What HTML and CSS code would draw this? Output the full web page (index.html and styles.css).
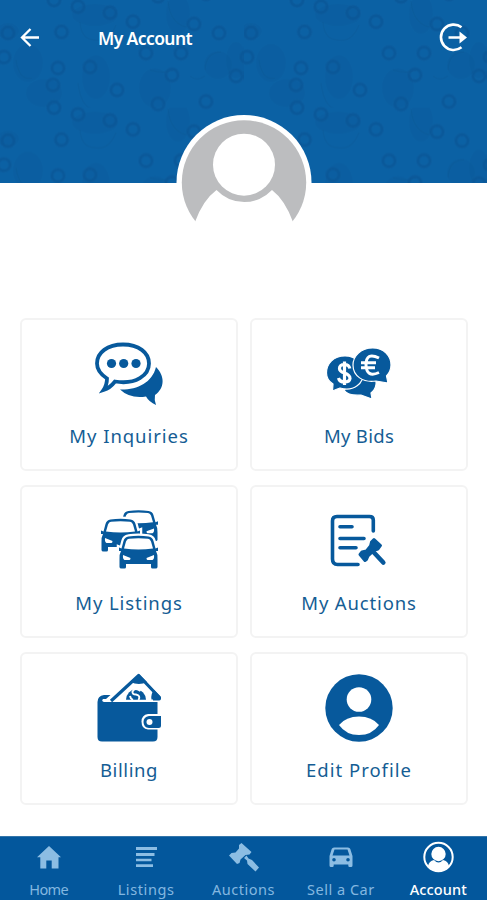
FILE: index.html
```html
<!DOCTYPE html>
<html lang="en">
<head>
<meta charset="utf-8">
<title>My Account</title>
<link rel="stylesheet" href="styles.css">
</head>
<body>
<div class="screen">
  <header class="hero">
    <svg class="hero-pattern" width="487" height="183" aria-hidden="true">
      <defs>
        <g id="ring"><circle r="6" fill="none" stroke="#09508f" stroke-opacity=".2" stroke-width="4.500"/><circle r="6" fill="none" stroke="#09508f" stroke-opacity=".3" stroke-width="2.500"/></g>
        <pattern id="doodles" width="243" height="107.7" patternUnits="userSpaceOnUse">
          <g fill="#084f8d" fill-opacity=".13">
            <ellipse cx="95" cy="15" rx="23" ry="11"/><ellipse cx="28" cy="63" rx="15" ry="19"/>
            <ellipse cx="96" cy="77" rx="14" ry="22"/><ellipse cx="178" cy="14" rx="12" ry="20"/>
            <ellipse cx="218" cy="65" rx="14" ry="14"/><ellipse cx="44" cy="93" rx="18" ry="14"/>
            <ellipse cx="155" cy="88" rx="16" ry="20"/><ellipse cx="8" cy="31" rx="11" ry="8"/>
            <ellipse cx="236" cy="60" rx="10" ry="18"/>
          </g>
          <g fill="none" stroke="#09508f" stroke-opacity=".22" stroke-width="1.5">
            <path d="M80 22q1 17 14 18 15 3 22-15M78 83q3 24 15 26M168 1q2 22 18 26M150 70q13 4 23 0M190 76q7 6 15 0M16 60q3 21 16 18M205 70q1-18 16-18"/>
          </g>
          <use href="#ring" x="78" y="6.7"/><use href="#ring" x="78" y="114.4"/>
          <use href="#ring" x="110" y="12.7"/><use href="#ring" x="133" y="21.7"/>
          <use href="#ring" x="61.5" y="32"/><use href="#ring" x="194" y="24"/>
          <use href="#ring" x="219" y="33"/><use href="#ring" x="146" y="53"/>
          <use href="#ring" x="181" y="53"/><use href="#ring" x="58" y="68"/>
          <use href="#ring" x="90" y="67"/><use href="#ring" x="53" y="85"/>
          <use href="#ring" x="117" y="90"/><use href="#ring" x="172" y="75"/>
          <use href="#ring" x="158" y="104"/><use href="#ring" x="158" y="-3.7"/>
          <use href="#ring" x="206" y="101.5"/><use href="#ring" x="206" y="-6.2"/>
          <use href="#ring" x="4" y="57"/><use href="#ring" x="247" y="57"/>
          <use href="#ring" x="236" y="76"/><use href="#ring" x="8" y="33"/>
          <use href="#ring" x="54" y="0"/><use href="#ring" x="54" y="107.7"/>
        </pattern>
      </defs>
      <rect width="487" height="183" fill="url(#doodles)"/>
    </svg>
    <div class="topbar">
      <svg width="20" height="20" viewBox="0 0 20 20" fill="none" stroke="#fff" stroke-width="2.3"><path d="M19 9.500H2.500M10.500 1 2 9.500l8.500 8.500"/></svg>
      <h1 class="title">My Account</h1>
      <svg class="logout" width="30" height="30" viewBox="0 0 30 30" fill="none" stroke="#fff" stroke-width="2.600"><path d="M23.500 4.300A12.700 12.700 0 1 0 23.500 24.300M10.500 14.500H26"/><path d="M21.500 8.500 29 14.500l-7.500 6z" fill="#fff" stroke="none"/></svg>
    </div>
    <svg class="avatar" width="136" height="136" viewBox="176 114 136 136" role="img" aria-label="Avatar">
      <circle cx="244" cy="182.500" r="67.500" fill="#fff"/>
      <circle cx="244" cy="182.500" r="62.200" fill="#bcbdbf"/>
      <path d="M195 222Q203 200 216.500 190A38 38 0 0 0 272 190Q285 200 293 222L300 250H188Z" fill="#fff"/>
      <circle cx="244" cy="164.700" r="31" fill="#fff"/>
    </svg>
  </header>

  <main class="cards">
    <a class="card">
      <svg class="icon" viewBox="89 333 80 80">
        <path d="M156 367C165 376 165 388 155 395Q154 400 156 405Q149 402 146 396.500Q130 399 120 389.500C137 390 152 383 156 367Z" fill="#07599c"/>
        <path d="M123 344.500C107.500 344.500 97 352.500 97 363.500Q97 372 107 378.500Q107 385 103.500 390Q110 388 115 381.500C136 385 149 375 149 363.500C149 352.500 138.500 344.500 123 344.500Z" fill="#fff" stroke="#07599c" stroke-width="3.800"/>
        <g fill="#07599c"><circle cx="111.500" cy="363.500" r="4.600"/><circle cx="123.700" cy="363.500" r="4.600"/><circle cx="136" cy="363.500" r="4.600"/></g>
      </svg>
      <span class="label inquiries">My Inquiries</span>
    </a>
    <a class="card">
      <svg class="icon" viewBox="319 333 80 80">
        <g fill="#07599c" stroke="#fff" stroke-width="1.200">
          <path d="M344 390Q348 396 361 395L372 399L371 393Q377 389 376 380L360 378Z"/>
          <path d="M345 356C333 356 326.500 364 326.500 373Q326.500 380 333 384L332.500 391Q337 389 340 388C354 392 364 383 363 373C363 364 356 356 345 356Z"/>
          <path d="M372.700 348C361 348 353 356 353 365C353 376 363 383 376 381L388 383L386.500 376Q391 371 391 365C391 356 384 348 372.700 348Z"/>
        </g>
        <path d="M349.800 368.500Q349 364.500 344.500 364.500Q339.500 364.500 339.500 368.500Q339.500 371.500 344.500 373Q350 375 350 378.500Q349.500 382 344.500 382Q339.500 382 338.500 378M344.500 361.500V385" fill="none" stroke="#fff" stroke-width="3.200"/>
        <path d="M379 358Q366 351.500 366 365Q366.500 378 379 372.500M361 362.700H376M361 367.700H375" fill="none" stroke="#fff" stroke-width="3"/>
      </svg>
      <span class="label bids">My Bids</span>
    </a>
    <a class="card">
      <svg class="icon" viewBox="89 500 80 80">
        <defs>
          <g id="frontcar">
            <path d="M-15-13Q-14-17-10-17.500Q0-19 10-17.500Q14-17 15-13L17-5.500L19.500-6.500V-3H17.500Q19.200 0 19 5V13Q19 14.500 17 14.500H14Q12.500 14.500 12.500 13V10H-12.500V13Q-12.500 14.500-14 14.500H-17Q-19 14.500-19 13V5Q-19.200 0-17.500-3H-19.500V-6.500L-17-5.500Z" />
            <path d="M-12.500-12.500Q-11.500-15-9.500-15.300Q0-16.300 9.500-15.300Q11.500-15 12.500-12.500L14.500-5.500Q0-3.500 -14.500-5.500ZM-15.500 1L-8 4Q-8 6-9 6H-14Q-16 5-15.500 1ZM15.500 1L8 4Q8 6 9 6H14Q16 5 15.500 1Z" fill="#fff"/>
          </g>
        </defs>
        <g fill="#07599c">
          <use href="#frontcar" transform="translate(138.500 527.500) scale(1 .95)"/>
          <use href="#frontcar" transform="translate(120.500 537)" stroke="#fff" stroke-width="4.500"/>
          <use href="#frontcar" transform="translate(120.500 537)"/>
          <use href="#frontcar" transform="translate(138.500 554)" stroke="#fff" stroke-width="4.500"/>
          <use href="#frontcar" transform="translate(138.500 554)"/>
        </g>
      </svg>
      <span class="label listings">My Listings</span>
    </a>
    <a class="card">
      <svg class="icon" viewBox="319 500 80 80">
        <g fill="none" stroke="#07599c" stroke-width="3.600" stroke-linecap="round">
          <path d="M373.300 531V520Q373.300 516.500 369.500 516.500H337Q332.500 516.500 332.500 521V559Q332.500 564.500 337.500 564.500H358M340 526.800H352M340 538.500H364M340 547.700H356" />
        </g>
        <g fill="#07599c" stroke="#07599c" stroke-linejoin="round" stroke-linecap="round">
          <path d="M374 539.500 380.500 545.500 378 549 374.500 550 368 556 366.500 559.500 365 560.500 360 554.500 362 552 366.500 551 370.500 546 371.500 542Z" stroke-width="3"/>
          <path d="M373 551.500 383.300 562.500" stroke-width="4.600"/>
        </g>
      </svg>
      <span class="label auctions">My Auctions</span>
    </a>
    <a class="card">
      <svg class="icon" viewBox="89 667 80 80">
        <path d="M111 701 138.700 675.500 159 697V699H153" fill="#fff" stroke="#07599c" stroke-width="3.200" stroke-linejoin="round"/>
        <path d="M138.700 674 147 682Q139 686 130.500 682ZM154 690 161 697V699.500H151.500Q150.500 694 154 690Z" fill="#07599c"/>
        <path d="M126 699.800A10 10.500 0 1 1 146 699.800Z" fill="#07599c"/>
        <path d="M140.500 691Q135 687 132.500 691.500Q132 694.500 136 694.500Q141 695.500 138.500 700M130 696Q130.500 699 133 700" fill="none" stroke="#fff" stroke-width="1.900"/>
        <path d="M110.500 695H104Q97.500 696 97.500 702V737Q97.500 741.500 102 741.500H153Q157.500 741.500 157.500 737V702H104Q101 701 103 699H106Z" fill="#07599c"/>
        <path d="M164 714H148Q141.500 715 141.500 721.500Q141.500 729 148 729.500H164Z" fill="#fff"/>
        <path d="M161 716H149Q143.500 717 143.500 722Q143.500 727.500 149 728H158.500Q161 728 161 725.500Z" fill="#07599c"/>
        <circle cx="149.500" cy="722" r="3" fill="#fff"/>
      </svg>
      <span class="label billing">Billing</span>
    </a>
    <a class="card">
      <svg class="icon" viewBox="319 667 80 80">
        <circle cx="359" cy="708" r="33.700" fill="#07599c"/>
        <circle cx="359" cy="699.500" r="12.300" fill="#fff"/>
        <path d="M339 725Q346 716.500 359 716.500T379 725Q372 735 359 735T339 725Z" fill="#fff"/>
      </svg>
      <span class="label profile">Edit Profile</span>
    </a>
  </main>

  <nav class="tabs">
    <a class="tab">
      <svg viewBox="33 839 32 36"><path d="M49 846 37 857.300H40.300V868.500H46.300V860.500H51.700V868.500H58.500V857.300H61Z"/></svg>
      <span class="home">Home</span>
    </a>
    <a class="tab">
      <svg viewBox="130 839 32 36"><path d="M136 847H157V850H136ZM136 853H154.500V856H136ZM136 858.700H151.500V861.200H136ZM136 864.200H153V867H136Z"/></svg>
      <span class="list">Listings</span>
    </a>
    <a class="tab">
      <svg viewBox="227 839 32 36"><path d="M241.500 843 251.500 852 249.500 854.500 245.500 855 240.500 859.500 239.500 863 237 864 229 855.500 231.500 853 235.500 852.500 239 848.500 239 845ZM246.500 855.500 248.500 858.500 252 860 259 867.500 255.500 871.500 247.500 864 247 860.500 244 858Z"/></svg>
      <span class="auct">Auctions</span>
    </a>
    <a class="tab">
      <svg viewBox="325 839 32 36"><path fill-rule="evenodd" d="M334 847.500H348Q349.700 847.500 350.300 849L352.500 856V865.500Q352.500 867 351 867H349.500Q348.300 867 348.300 865.500V864.500H333.700V865.500Q333.700 867 332.500 867H331Q329.500 867 329.500 865.500V856L331.700 849Q332.300 847.500 334 847.500ZM334.500 849.500 332.500 855.500H349.500L347.500 849.500ZM334 858A1.800 1.800 0 1 0 334 861.600A1.800 1.800 0 0 0 334 858ZM348 858A1.800 1.800 0 1 0 348 861.600A1.800 1.800 0 0 0 348 858Z"/></svg>
      <span class="sell">Sell a Car</span>
    </a>
    <a class="tab active">
      <svg viewBox="422 839 32 36"><circle cx="438.500" cy="857" r="14.200" fill="none" stroke="#fff" stroke-width="2"/><circle cx="438.500" cy="854" r="7.200"/><path d="M428 866Q429 861 434 860Q438.500 865 443 860Q448 861 449 866Q445 871 438.500 871T428 866Z"/></svg>
      <span class="acct">Account</span>
    </a>
  </nav>
</div>
</body>
</html>
```

FILE: styles.css
```css
* { box-sizing: border-box; }
body {
  margin: 0;
  background: #fff;
  font-family: "Noto Sans", "Open Sans", sans-serif;
}
.screen {
  width: 487px;
  height: 900px;
  display: flex;
  flex-direction: column;
  overflow: hidden;
}
.hero {
  position: relative;
  height: 183px;
  flex: none;
  background: #0b61a4;
}
.hero-pattern { position: absolute; left: 0; top: 0; }
.topbar {
  position: relative;
  display: flex;
  align-items: center;
  height: 75px;
  padding: 0 19px 0 20px;
}
.title {
  margin: 0 0 0 58px;
  color: #fff;
  font-size: 17.5px;
  font-weight: 600;
  line-height: 24px;
  letter-spacing: -0.6px;
  white-space: nowrap;
}
.logout { margin-left: auto; }
.avatar { position: absolute; left: 176px; top: 114px; }
.cards {
  flex: 1;
  display: grid;
  grid-template-columns: 218px 218px;
  grid-auto-rows: 153px;
  gap: 14px 12px;
  padding: 135px 20px 0 20px;
  align-content: start;
}
.card {
  display: flex;
  flex-direction: column;
  align-items: center;
  padding-top: 13px;
  border: 2px solid #f3f3f3;
  border-radius: 6px;
  background: #fff;
}
.icon { display: block; width: 80px; height: 80px; flex: none; }
.label {
  margin-top: 8px;
  color: #155d94;
  font-size: 18.5px;
  line-height: 30px;
  white-space: nowrap;
}
.inquiries { letter-spacing: 0.95px; }
.bids { letter-spacing: 0.3px; }
.listings { letter-spacing: 0.9px; }
.auctions { letter-spacing: 0.85px; }
.billing { letter-spacing: 0.6px; }
.profile { letter-spacing: 1px; }
.tabs {
  display: grid;
  grid-template-columns: repeat(5, 1fr);
  height: 64px;
  flex: none;
  background: #03579c;
  border-top: 1px solid #3475a9;
}
.tab {
  display: flex;
  flex-direction: column;
  align-items: center;
  padding-top: 2px;
  color: #83b7e0;
  font-size: 14.500px;
  line-height: 20px;
  white-space: nowrap;
}
.tab svg { width: 32px; height: 36px; fill: #8cbde3; flex: none; }
.tab span { margin-top: 4px; }
.tab.active { color: #fff; font-weight: 500; }
.tab.active svg { fill: #fff; }
.home { letter-spacing: -0.6px; }
.list { letter-spacing: 0.6px; }
.auct { letter-spacing: 0.5px; }
.sell { letter-spacing: 0.5px; }
.acct { letter-spacing: 0.1px; }
```
